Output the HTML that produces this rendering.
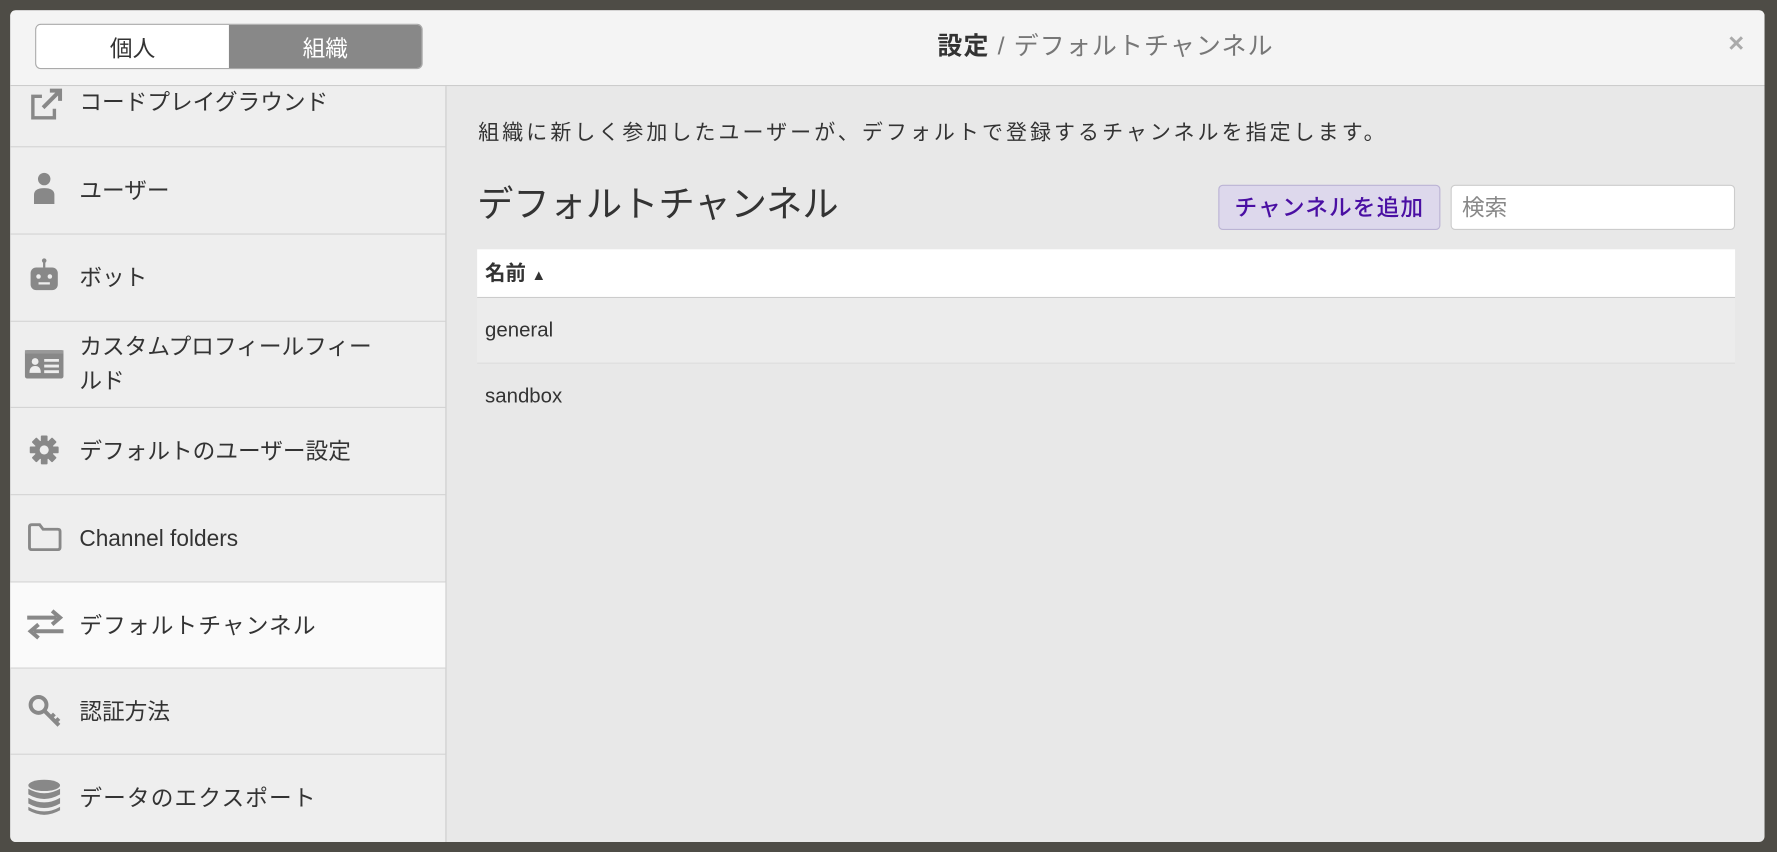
<!DOCTYPE html>
<html><head><meta charset="utf-8"><style>
html,body{margin:0;padding:0;width:1777px;height:852px;overflow:hidden;background:#4e4c46;}
#w{position:absolute;left:0;top:0;width:1568px;height:752px;transform:scale(1.13329);transform-origin:0 0;font-family:"Liberation Sans","Noto Sans CJK JP",sans-serif;color:#333;}
.abs{position:absolute;}
#modal{left:9px;top:9px;width:1548px;height:734px;background:#e8e8e8;border-radius:5px;overflow:hidden;}
#hdr{left:0;top:0;width:1548px;height:66px;background:#f4f4f4;border-bottom:1px solid #ccc;}
#tog{left:22px;top:12px;width:340px;height:38px;border:1px solid #aaa;border-radius:5px;overflow:hidden;display:flex;font-size:20px;}
#tog div{flex:1;display:flex;align-items:center;justify-content:center;}
#side{left:0;top:67px;width:384px;height:667px;background:#eee;border-right:1px solid #ccc;}
.it{position:absolute;left:0;width:384px;border-bottom:1px solid #d4d4d4;font-size:20px;color:#333;}
.it .t{position:absolute;left:61px;line-height:30px;top:24px !important;}
.it svg{position:absolute;left:14px;}
</style></head><body><div id="w">
<div id="modal" class="abs">
 <div id="hdr" class="abs">
  <div id="tog" class="abs"><div style="background:#fff;color:#333">個人</div><div style="background:#888;color:#fff">組織</div></div>
  <div class="abs" style="left:385px;width:1163px;top:17px;text-align:center;font-size:22px;line-height:30px;color:#777;letter-spacing:1px"><b style="color:#333">設定</b> / デフォルトチャンネル</div>
  <div class="abs" style="left:1516px;top:16px;font-size:24px;font-weight:bold;color:#aaa">×</div>
 </div>
 <div id="side" class="abs">
  <div class="it" style="top:-24px;height:77px"><svg width="34" height="34" viewBox="0 0 34 34" style="top:24px"><path d="M14 9H6v19h19v-8" fill="none" stroke="#888" stroke-width="3"/><path d="M15 19L29 5M21 4h9v9" fill="none" stroke="#888" stroke-width="3.5"/></svg><span class="t">コードプレイグラウンド</span></div>
  <div class="it" style="top:54px;height:76px"><svg width="34" height="34" viewBox="0 0 34 34" style="top:20px"><circle cx="16" cy="8" r="5.5" fill="#888"/><path d="M7 30v-8q0-6 9-6t9 6v8z" fill="#888"/></svg><span class="t">ユーザー</span></div>
  <div class="it" style="top:131px;height:76px"><svg width="34" height="34" viewBox="0 0 34 34" style="top:20px"><circle cx="16" cy="3" r="2" fill="#888"/><rect x="15" y="3" width="2" height="6" fill="#888"/><rect x="4" y="9" width="24" height="20" rx="5" fill="#888"/><circle cx="11" cy="17" r="2" fill="#eee"/><circle cx="21" cy="17" r="2" fill="#eee"/><path d="M11 23h10" stroke="#eee" stroke-width="2"/></svg><span class="t">ボット</span></div>
  <div class="it" style="top:208px;height:75px"><svg width="38" height="34" viewBox="0 0 38 34" style="top:20px;left:11px"><rect x="2" y="5" width="34" height="25" rx="2" fill="#888"/><rect x="2" y="5" width="34" height="3" fill="#999"/><circle cx="11" cy="15" r="3" fill="#eee"/><path d="M6 25q0-6 5-6t5 6z" fill="#eee"/><path d="M19 14h13M19 19h13M19 24h13" stroke="#eee" stroke-width="2.5"/></svg><span class="t" style="top:8px !important;position:absolute">カスタムプロフィールフィー<br>ルド</span></div>
  <div class="it" style="top:284px;height:76px"><svg width="34" height="34" viewBox="0 0 34 34" style="top:20px"><g fill="#888" transform="translate(16 17) scale(0.85)"><circle r="10"/><rect x="-3.5" y="-15" width="7" height="30" rx="1"/><rect x="-3.5" y="-15" width="7" height="30" rx="1" transform="rotate(45)"/><rect x="-3.5" y="-15" width="7" height="30" rx="1" transform="rotate(90)"/><rect x="-3.5" y="-15" width="7" height="30" rx="1" transform="rotate(135)"/></g><circle cx="16" cy="17" r="4" fill="#eee"/></svg><span class="t">デフォルトのユーザー設定</span></div>
  <div class="it" style="top:361px;height:76px"><svg width="34" height="34" viewBox="0 0 34 34" style="top:21px"><path d="M3 7q0-2 2-2h7l3 4h13q2 0 2 2v14q0 2-2 2H5q-2 0-2-2z" fill="none" stroke="#888" stroke-width="2.5"/></svg><span class="t">Channel folders</span></div>
  <div class="it" style="top:438px;height:75px;background:#fafafa"><svg width="36" height="34" viewBox="0 0 36 34" style="top:20px;left:13px"><path d="M2 11h26M24 5l7 6-7 6" fill="none" stroke="#888" stroke-width="3.5"/><path d="M34 23H8M12 17l-7 6 7 6" fill="none" stroke="#888" stroke-width="3.5"/></svg><span class="t" style="letter-spacing:1px">デフォルトチャンネル</span></div>
  <div class="it" style="top:514px;height:75px"><svg width="34" height="34" viewBox="0 0 34 34" style="top:20px"><circle cx="11" cy="12" r="7" fill="none" stroke="#888" stroke-width="3.5"/><path d="M16 17l13 13M22 23l3-3M26 27l3-3" stroke="#888" stroke-width="3.5"/></svg><span class="t">認証方法</span></div>
  <div class="it" style="top:590px;height:77px;border:0"><svg width="34" height="34" viewBox="0 0 34 34" style="top:21px"><g fill="#888"><ellipse cx="16" cy="6" rx="14" ry="5"/><path d="M2 9q14 8 28 0v5q-14 8-28 0z"/><path d="M2 17q14 8 28 0v5q-14 8-28 0z"/><path d="M2 25q14 8 28 0v3q-14 8-28 0z"/></g></svg><span class="t" style="letter-spacing:1px">データのエクスポート</span></div>
 </div>
 <div class="abs" style="left:413px;top:95px;font-size:18.5px;line-height:26px;letter-spacing:2.7px">組織に新しく参加したユーザーが、デフォルトで登録するチャンネルを指定します。</div>
 <div class="abs" style="left:412px;top:148px;font-size:32px;line-height:46px">デフォルトチャンネル</div>
 <div class="abs" style="left:1066px;top:154px;width:194px;height:38px;background:#ddd8ec;border:1px solid #bbb3d4;border-radius:4px;color:#4a0fa3;font-size:20px;font-weight:500;line-height:40px;text-align:center;letter-spacing:1px">チャンネルを追加</div>
 <div class="abs" style="left:1271px;top:154px;width:249px;height:38px;background:#fff;border:1px solid #ccc;border-radius:4px;color:#888;font-size:20px;line-height:40px;text-indent:9px">検索</div>
 <div class="abs" style="left:412px;top:211px;width:1110px;height:42px;background:#fff;border-bottom:1px solid #ccc;font-size:18px;font-weight:bold;line-height:42px;text-indent:7px">名前 <span style="font-size:13px">▲</span></div>
 <div class="abs" style="left:412px;top:254px;width:1110px;height:57px;background:#ececec;border-bottom:1px solid #ddd;font-size:18px;line-height:56px;text-indent:7px">general</div>
 <div class="abs" style="left:412px;top:312px;width:1110px;height:57px;font-size:18px;line-height:56px;text-indent:7px">sandbox</div>
</div>
</div></body></html>
